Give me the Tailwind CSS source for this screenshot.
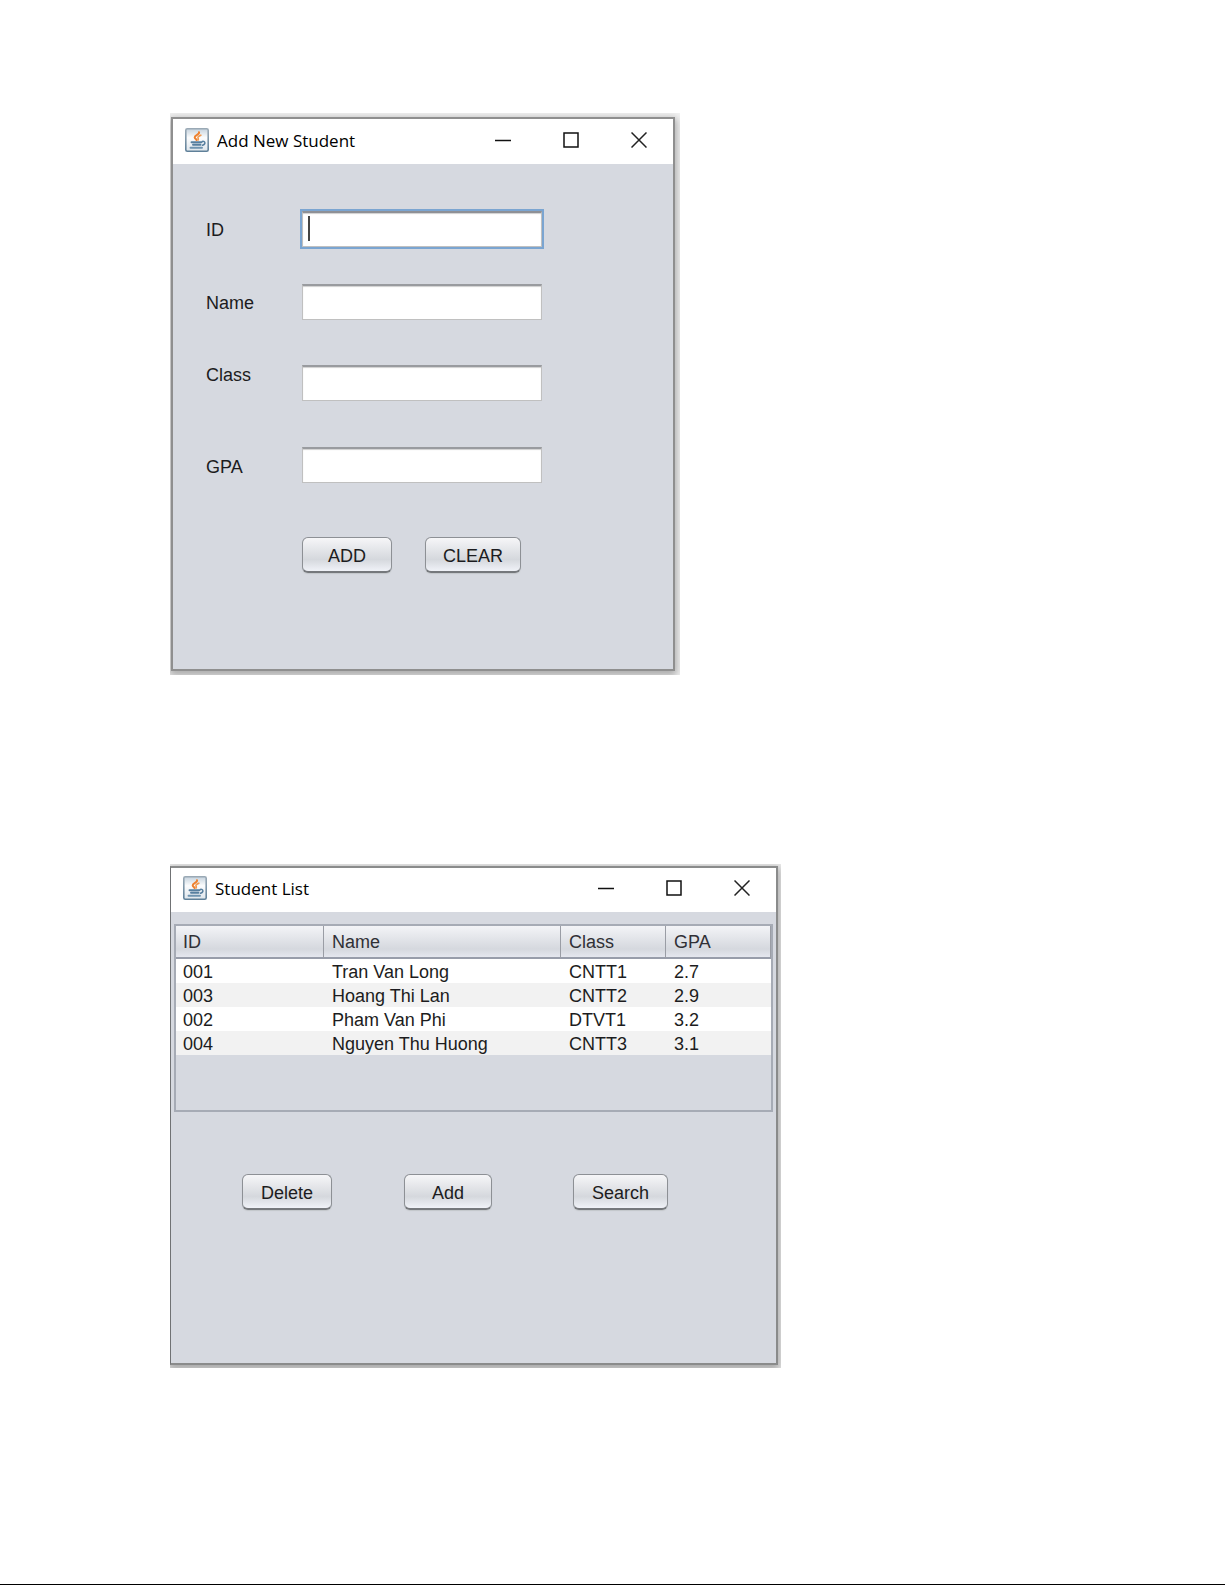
<!DOCTYPE html>
<html lang="en">
<head>
<meta charset="utf-8">
<meta name="viewport" content="width=device-width, initial-scale=1">
<title>Student Management</title>
<script src="https://cdn.jsdelivr.net/npm/@tailwindcss/browser@4"></script>
</head>
<body class="bg-white">
<svg class="absolute size-0" aria-hidden="true">
  <defs>
    <linearGradient id="tile" x1="0" y1="0" x2="0" y2="1">
      <stop offset="0" stop-color="#c6d3de"/><stop offset="0.4" stop-color="#fbfcfd"/><stop offset="1" stop-color="#dfe6ec"/>
    </linearGradient>
    <linearGradient id="edge" x1="0" y1="0" x2="0" y2="1">
      <stop offset="0" stop-color="#9aa9b5"/><stop offset="1" stop-color="#5f8099"/>
    </linearGradient>
    <symbol id="java" viewBox="0 0 24 24">
      <rect x="0.8" y="0.8" width="22.4" height="22.4" rx="1.5" fill="url(#tile)" stroke="url(#edge)" stroke-width="1.6"/>
      <g fill="none" stroke-linecap="round">
        <path d="M14 4.200c1 2.200-4.600 2.900-4.300 5.300.2 1.100 1.300 1.600 1.800 2.400" stroke="#ee8130" stroke-width="2"/>
        <path d="M15.800 7.200c-2 .8-3.200 1.400-2.800 2.600.3.800.6 1.200 0 2.200" stroke="#f29a50" stroke-width="1.700"/>
        <path d="M6.500 14.200h10M8 16.800h7.500" stroke="#577f9f" stroke-width="1.900"/>
        <path d="M17.300 13.400c3.200-.6 3.600 2.800.2 3.800" stroke="#577f9f" stroke-width="1.500"/>
        <path d="M5.500 19.800h11.500" stroke="#6f94b0" stroke-width="1.900"/>
      </g>
    </symbol>
    <symbol id="min" viewBox="0 0 16 16"><path d="M0 8.500h16" stroke="#111" stroke-width="1.500"/></symbol>
    <symbol id="max" viewBox="0 0 16 16"><path d="M1 1h14v14H1z" fill="none" stroke="#111" stroke-width="1.500"/></symbol>
    <symbol id="close" viewBox="0 0 16 16"><path d="M.5.5l15 15M15.500.5l-15 15" stroke="#222" stroke-width="1.500"/></symbol>
  </defs>
</svg>

<main class="flex min-h-screen flex-col items-start gap-[189px] border-b border-black pt-[113px] pl-[170px] font-['Liberation_Sans',Arial,sans-serif] text-lg/6 text-[#1c1c20]">

  <div class="w-full max-w-[510px] overflow-hidden bg-[#f4f4f4] pt-1 pr-[5px] pb-1 pl-px">
    <section class="border-2 border-[#8f8f8f] bg-[#d6d9e0] shadow-[0_3px_8px_2px_rgba(0,0,0,0.3)]">
      <header class="flex h-[45px] items-center bg-white pb-[3px] pl-3">
        <svg class="size-6 shrink-0"><use href="#java"/></svg>
        <h1 class="grow pt-0.5 pl-2 font-['Open_Sans',sans-serif] text-[17px] leading-6 text-black">Add New Student</h1>
        <button type="button" aria-label="Minimize" class="flex w-17 justify-center"><svg class="size-4"><use href="#min"/></svg></button>
        <button type="button" aria-label="Maximize" class="flex w-17 justify-center"><svg class="size-4"><use href="#max"/></svg></button>
        <button type="button" aria-label="Close" class="flex w-17 justify-center"><svg class="size-4"><use href="#close"/></svg></button>
      </header>
      <form class="flex flex-col pt-[47px] pb-24 pl-[33px]">
        <div class="flex items-center">
          <label for="sid" class="w-24 pt-0.5">ID</label>
          <div class="relative w-60">
            <input id="sid" type="text" class="block h-9 w-full border border-t-2 border-[#c0c0c0] border-t-[#8e9096] bg-white px-1 outline-2 outline-[#7ba5d1] shadow-[inset_0_1px_1px_#d0d0d0]">
            <span class="absolute top-[5px] left-[6px] h-[25px] w-[2px] bg-[#444]"></span>
          </div>
        </div>
        <div class="mt-[37px] flex items-center">
          <label for="sname" class="w-24 pt-0.5">Name</label>
          <input id="sname" type="text" class="h-9 w-60 border border-t-2 border-[#c0c0c0] border-t-[#999b9f] bg-white px-1 shadow-[inset_0_1px_1px_#d0d0d0]">
        </div>
        <div class="mt-[45px] flex items-start">
          <label for="sclass" class="w-24 leading-5">Class</label>
          <input id="sclass" type="text" class="h-9 w-60 border border-t-2 border-[#c0c0c0] border-t-[#999b9f] bg-white px-1 shadow-[inset_0_1px_1px_#d0d0d0]">
        </div>
        <div class="mt-[46px] flex items-center">
          <label for="sgpa" class="w-24 pt-1">GPA</label>
          <input id="sgpa" type="text" class="h-9 w-60 border border-t-2 border-[#c0c0c0] border-t-[#999b9f] bg-white px-1 shadow-[inset_0_1px_1px_#d0d0d0]">
        </div>
        <div class="mt-[54px] flex gap-[33px] pl-24">
          <button type="button" class="h-9 w-[90px] rounded-md border border-b-2 border-[#8d9095] border-b-[#75787c] bg-linear-to-b from-[#f6f6f8] via-[#d5d8dd] via-65% to-[#f0f2f8] pt-0.5 shadow-[0_1px_1px_#c3c6ca]">ADD</button>
          <button type="button" class="h-9 w-24 rounded-md border border-b-2 border-[#8d9095] border-b-[#75787c] bg-linear-to-b from-[#f6f6f8] via-[#d5d8dd] via-65% to-[#f0f2f8] pt-0.5 shadow-[0_1px_1px_#c3c6ca]">CLEAR</button>
        </div>
      </form>
    </section>
  </div>

  <div class="w-full max-w-[611px] overflow-hidden bg-[#eeeeee] pt-[2px] pr-[3px] pb-[3px]">
    <section class="border-2 border-l border-[#8a8b8b] border-l-[#707274] bg-[#d6d9e0] shadow-[0_3px_8px_2px_rgba(0,0,0,0.3)]">
      <header class="flex h-11 items-center bg-white pb-1 pl-3">
        <svg class="size-6 shrink-0"><use href="#java"/></svg>
        <h2 class="grow pt-0.5 pl-2 font-['Open_Sans',sans-serif] text-[17px] leading-6 text-black">Student List</h2>
        <button type="button" aria-label="Minimize" class="flex w-17 justify-center"><svg class="size-4"><use href="#min"/></svg></button>
        <button type="button" aria-label="Maximize" class="flex w-17 justify-center"><svg class="size-4"><use href="#max"/></svg></button>
        <button type="button" aria-label="Close" class="flex w-17 justify-center"><svg class="size-4"><use href="#close"/></svg></button>
      </header>
      <div class="mx-[3px] mt-3 border-2 border-[#a6abb5] pb-[55px]">
        <table class="w-full table-fixed border-separate border-spacing-0 text-left">
          <colgroup><col class="w-[148px]"><col class="w-[237px]"><col class="w-[105px]"><col></colgroup>
          <thead class="bg-linear-to-b from-[#f3f4f7] via-[#d5d8de] via-70% to-[#e9ebf3] text-[#303036]">
            <tr class="h-[33px]">
              <th class="border-r border-b-2 border-r-[#9a9da5] border-b-[#989daa] pl-[7px] font-normal">ID</th>
              <th class="border-r border-b-2 border-r-[#9a9da5] border-b-[#989daa] pl-2 font-normal">Name</th>
              <th class="border-r border-b-2 border-r-[#9a9da5] border-b-[#989daa] pl-2 font-normal">Class</th>
              <th class="border-r border-b-2 border-r-[#9a9da5] border-b-[#989daa] pl-2 font-normal">GPA</th>
            </tr>
          </thead>
          <tbody class="leading-[22px]">
            <tr class="h-6 bg-white"><td class="pt-0.5 pl-[7px]">001</td><td class="pt-0.5 pl-2">Tran Van Long</td><td class="pt-0.5 pl-2">CNTT1</td><td class="pt-0.5 pl-2">2.7</td></tr>
            <tr class="h-6 bg-[#f2f2f2]"><td class="pt-0.5 pl-[7px]">003</td><td class="pt-0.5 pl-2">Hoang Thi Lan</td><td class="pt-0.5 pl-2">CNTT2</td><td class="pt-0.5 pl-2">2.9</td></tr>
            <tr class="h-6 bg-white"><td class="pt-0.5 pl-[7px]">002</td><td class="pt-0.5 pl-2">Pham Van Phi</td><td class="pt-0.5 pl-2">DTVT1</td><td class="pt-0.5 pl-2">3.2</td></tr>
            <tr class="h-6 bg-[#f2f2f2]"><td class="pt-0.5 pl-[7px]">004</td><td class="pt-0.5 pl-2">Nguyen Thu Huong</td><td class="pt-0.5 pl-2">CNTT3</td><td class="pt-0.5 pl-2">3.1</td></tr>
          </tbody>
        </table>
      </div>
      <div class="flex pt-[62px] pb-[153px] pl-[71px]">
        <button type="button" class="h-9 w-[90px] rounded-md border border-b-2 border-[#8d9095] border-b-[#75787c] bg-linear-to-b from-[#f6f6f8] via-[#d5d8dd] via-65% to-[#f0f2f8] pt-0.5 shadow-[0_1px_1px_#c3c6ca]">Delete</button>
        <button type="button" class="ml-[72px] h-9 w-[88px] rounded-md border border-b-2 border-[#8d9095] border-b-[#75787c] bg-linear-to-b from-[#f6f6f8] via-[#d5d8dd] via-65% to-[#f0f2f8] pt-0.5 shadow-[0_1px_1px_#c3c6ca]">Add</button>
        <button type="button" class="ml-[81px] h-9 w-[95px] rounded-md border border-b-2 border-[#8d9095] border-b-[#75787c] bg-linear-to-b from-[#f6f6f8] via-[#d5d8dd] via-65% to-[#f0f2f8] pt-0.5 shadow-[0_1px_1px_#c3c6ca]">Search</button>
      </div>
    </section>
  </div>
</main>
</body>
</html>
